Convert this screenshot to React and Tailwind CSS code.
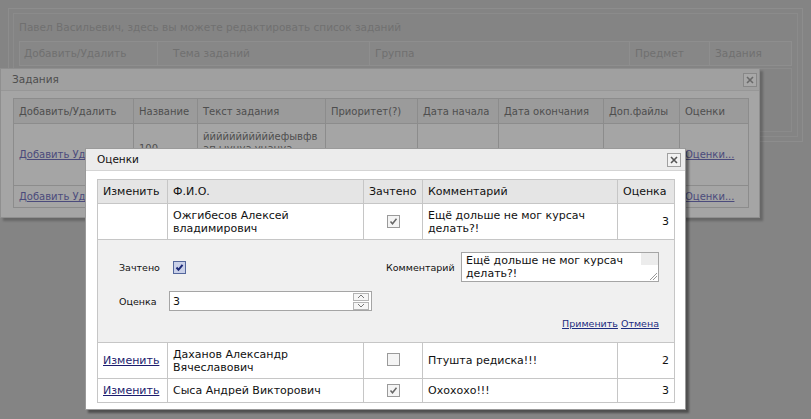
import React from 'react';

const Box = ({ checked, active }) => (
  <span
    className={
      active
        ? 'inline-flex w-[13px] h-[13px] items-center justify-center border border-[#54679c] bg-[#c9d0e8]'
        : 'inline-flex w-[13px] h-[13px] items-center justify-center border border-[#9a9a9a] bg-[#f4f4f4]'
    }
  >
    {checked && (
      <svg width="9" height="9" viewBox="0 0 9 9">
        <path
          d="M1.5 4.5 L3.5 6.8 L7.5 1.8"
          fill="none"
          stroke={active ? '#1c2a78' : '#666'}
          strokeWidth={active ? 2 : 1.5}
        />
      </svg>
    )}
  </span>
);

const Close = ({ dim }) => (
  <span
    className={
      dim
        ? 'flex w-[14px] h-[14px] items-center justify-center border border-[#888] bg-[#a8a8a8]'
        : 'flex w-[14px] h-[14px] items-center justify-center border border-[#a0a0a0] bg-[#f2f2f2]'
    }
  >
    <svg width="8" height="8" viewBox="0 0 8 8">
      <path d="M1 1 L7 7 M7 1 L1 7" stroke={dim ? '#6a6a6a' : '#555'} strokeWidth="1.6" />
    </svg>
  </span>
);

const Spin = () => (
  <span className="flex flex-col gap-[1px] mr-[2px]">
    <span className="flex w-[16px] h-[8px] items-center justify-center border border-[#b4b4b4] bg-[#f6f6f6]">
      <svg width="8" height="5" viewBox="0 0 8 5">
        <path d="M1 4 L4 1 L7 4" fill="none" stroke="#777" strokeWidth="1" />
      </svg>
    </span>
    <span className="flex w-[16px] h-[8px] items-center justify-center border border-[#b4b4b4] bg-[#f6f6f6]">
      <svg width="8" height="5" viewBox="0 0 8 5">
        <path d="M1 1 L4 4 L7 1" fill="none" stroke="#777" strokeWidth="1" />
      </svg>
    </span>
  </span>
);

// dimmed page behind both dialogs
const BackPage = () => (
  <div className="mx-[8px] mt-[6px] h-[134px] border border-[#8d8d8d] p-[4px]">
    <div className="h-full border border-[#8b8b8b] px-[5px]">
      <div className="pt-[7px] text-[10.5px] leading-[13px] text-[#707070]">
        Павел Васильевич, здесь вы можете редактировать список заданий
      </div>
      <div className="mt-[7px] flex h-[25px] border border-[#8e8e8e] bg-[#878787] text-[10.5px] text-[#707070]">
        <div className="w-[138px] pl-[4px] flex items-center border-r border-[#8e8e8e]">Добавить/Удалить</div>
        <div className="w-[212px] pl-[15px] flex items-center border-r border-[#8e8e8e]">Тема заданий</div>
        <div className="w-[260px] pl-[5px] flex items-center border-r border-[#8e8e8e]">Группа</div>
        <div className="w-[80px] pl-[5px] flex items-center border-r border-[#8e8e8e]">Предмет</div>
        <div className="flex-1 pl-[5px] flex items-center">Задания</div>
      </div>
      <div className="mt-[2px] h-[64px] border border-[#8b8b8b]" />
    </div>
  </div>
);

const tasksHead = [
  ['w-[120px]', 'Добавить/Удалить'],
  ['w-[64px]', 'Название'],
  ['w-[128px]', 'Текст задания'],
  ['w-[92px]', 'Приоритет(?)'],
  ['w-[81px]', 'Дата начала'],
  ['w-[105px]', 'Дата окончания'],
  ['w-[76px]', 'Доп.файлы'],
  ['w-[69px]', 'Оценки'],
];

const TasksDialog = () => (
  <div className="absolute left-0 top-[68px] w-[760px] h-[150px] bg-[#a5a5a5] border border-[#8f8f8f] shadow-[3px_3px_2px_rgba(0,0,0,0.22)] text-[10px] text-[#4e4e4e]">
    <div className="flex h-[22px] items-center justify-between bg-[#a0a0a0] border-b border-[#979797] pl-[11px] pr-[2px] text-[10.5px]">
      <span>Задания</span>
      <Close dim />
    </div>
    <table className="ml-[12px] mt-[7px] table-fixed border-collapse w-[735px]">
      <colgroup>
        {tasksHead.map(([w], i) => (
          <col key={i} className={w} />
        ))}
      </colgroup>
      <thead>
        <tr className="h-[25px] bg-[#9b9b9b]">
          {tasksHead.map(([, t], i) => (
            <th key={i} className="border border-[#8c8c8c] px-[5px] text-left font-normal whitespace-nowrap">
              {t}
            </th>
          ))}
        </tr>
      </thead>
      <tbody>
        <tr className="h-[62px]">
          <td className="border border-[#8c8c8c] px-[5px] whitespace-nowrap text-[#4b4b7c] underline">Добавить Удалить</td>
          <td className="border border-[#8c8c8c] px-[5px] align-top pt-[17px]">100</td>
          <td className="border border-[#8c8c8c] px-[5px] align-top pt-[7px] leading-[12px]">
            йййййййййййефывфв ап ыуцуа уцацуа
          </td>
          <td className="border border-[#8c8c8c]" />
          <td className="border border-[#8c8c8c]" />
          <td className="border border-[#8c8c8c]" />
          <td className="border border-[#8c8c8c]" />
          <td className="border border-[#8c8c8c] px-[5px] text-[#4b4b7c] underline">Оценки...</td>
        </tr>
        <tr className="h-[22px]">
          <td className="border border-[#8c8c8c] px-[5px] whitespace-nowrap text-[#4b4b7c] underline">Добавить Удалить</td>
          <td className="border border-[#8c8c8c]" />
          <td className="border border-[#8c8c8c]" />
          <td className="border border-[#8c8c8c]" />
          <td className="border border-[#8c8c8c]" />
          <td className="border border-[#8c8c8c]" />
          <td className="border border-[#8c8c8c]" />
          <td className="border border-[#8c8c8c] px-[5px] text-[#4b4b7c] underline">Оценки...</td>
        </tr>
      </tbody>
    </table>
  </div>
);

const cell = 'border border-[#c6c6c6] px-[5px]';

const GradesDialog = () => (
  <div className="absolute left-[85px] top-[148px] w-[601px] h-[262px] bg-white border border-[#9a9a9a] shadow-[3px_3px_2px_rgba(0,0,0,0.4)] text-[11px] text-[#111]">
    <div className="flex h-[22px] items-center justify-between bg-[#ececec] border-b border-[#d4d4d4] pl-[11px] pr-[4px] text-[10.5px]">
      <span>Оценки</span>
      <Close />
    </div>
    <table className="ml-[11px] mt-[8px] table-fixed border-collapse w-[577px] leading-[13px]">
      <colgroup>
        <col className="w-[70px]" />
        <col className="w-[196px]" />
        <col className="w-[59px]" />
        <col className="w-[195px]" />
        <col className="w-[57px]" />
      </colgroup>
      <thead>
        <tr className="h-[24px] bg-[#e5e5e5]">
          <th className={cell + ' text-left font-normal'}>Изменить</th>
          <th className={cell + ' text-left font-normal'}>Ф.И.О.</th>
          <th className={cell + ' text-left font-normal'}>Зачтено</th>
          <th className={cell + ' text-left font-normal'}>Комментарий</th>
          <th className={cell + ' text-left font-normal'}>Оценка</th>
        </tr>
      </thead>
      <tbody>
        <tr className="h-[36px]">
          <td className={cell} />
          <td className={cell}>
            Ожгибесов Алексей
            <br />
            владимирович
          </td>
          <td className={cell + ' text-center'}>
            <Box checked />
          </td>
          <td className={cell}>
            Ещё дольше не мог курсач
            <br />
            делать?!
          </td>
          <td className={cell + ' text-right'}>3</td>
        </tr>
        <tr className="h-[103px] bg-[#f0f0f0]">
          <td colSpan={5} className="border border-[#c6c6c6] align-top">
            <div className="flex flex-col pl-[21px] pr-[15px] pt-[12px] text-[9.5px]">
              <div className="flex h-[30px] items-center">
                <span className="w-[54px]">Зачтено</span>
                <Box checked active />
                <span className="ml-[200px] w-[75px]">Комментарий</span>
                <div className="flex h-[30px] flex-1 border border-[#a5a5a5] bg-white text-[11px] leading-[13px]">
                  <div className="flex-1 pl-[4px] pt-[1px]">
                    Ещё дольше не мог курсач
                    <br />
                    делать?!
                  </div>
                  <div className="flex w-[17px] flex-col justify-between">
                    <div className="h-[12px] bg-[#ececec]" />
                    <svg width="17" height="9" viewBox="0 0 17 9">
                      <path d="M9 8 L16 1 M12 8 L16 4" stroke="#999" strokeWidth="1" />
                    </svg>
                  </div>
                </div>
              </div>
              <div className="mt-[9px] flex h-[20px] items-center">
                <span className="w-[50px]">Оценка</span>
                <div className="flex h-[20px] w-[203px] items-center justify-between border border-[#a5a5a5] bg-white text-[11px]">
                  <span className="pl-[3px]">3</span>
                  <Spin />
                </div>
              </div>
              <div className="mt-[6px] flex justify-end leading-[13px] text-[#1c2c80]">
                <span className="underline">Применить</span>
                <span className="ml-[3px] underline">Отмена</span>
              </div>
            </div>
          </td>
        </tr>
        <tr className="h-[36px]">
          <td className={cell + ' text-[#1c1c6e] underline'}>Изменить</td>
          <td className={cell}>
            Даханов Александр
            <br />
            Вячеславович
          </td>
          <td className={cell + ' text-center'}>
            <Box />
          </td>
          <td className={cell}>Птушта редиска!!!</td>
          <td className={cell + ' text-right'}>2</td>
        </tr>
        <tr className="h-[24px]">
          <td className={cell + ' text-[#1c1c6e] underline'}>Изменить</td>
          <td className={cell}>Сыса Андрей Викторович</td>
          <td className={cell + ' text-center'}>
            <Box checked />
          </td>
          <td className={cell}>Охохохо!!!</td>
          <td className={cell + ' text-right'}>3</td>
        </tr>
      </tbody>
    </table>
  </div>
);

export default function App() {
  return (
    <div className="relative w-[811px] h-[419px] overflow-hidden bg-[#848484] font-['DejaVu_Sans',sans-serif] pt-[2px]">
      <BackPage />
      <TasksDialog />
      <GradesDialog />
    </div>
  );
}
